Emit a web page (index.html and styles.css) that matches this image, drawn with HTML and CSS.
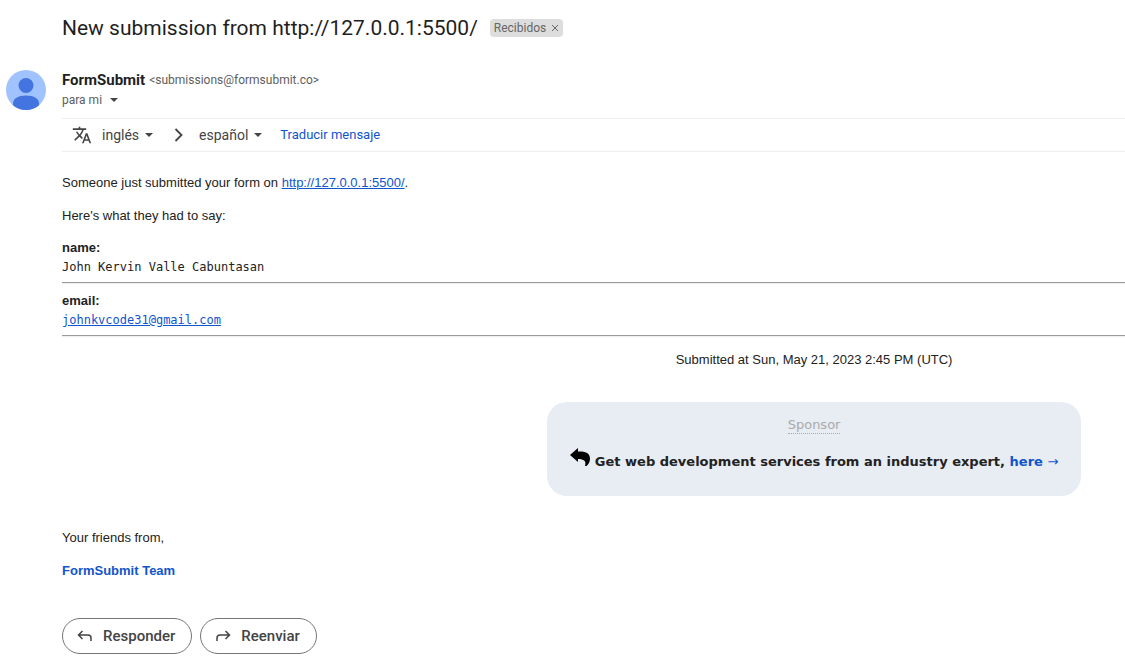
FILE: index.html
```html
<!DOCTYPE html>
<html lang="es">
<head>
<meta charset="utf-8">
<meta name="viewport" content="width=device-width, initial-scale=1">
<title>New submission from http://127.0.0.1:5500/</title>
<link rel="stylesheet" href="styles.css">
</head>
<body>
<main class="mail">
  <header class="subject">
    <h1 class="subject-title">New submission from http://127.0.0.1:5500/</h1>
    <div class="label">
      <span>Recibidos</span>
      <button class="label-remove" type="button" aria-label="Quitar etiqueta">
        <svg width="8" height="8" viewBox="0 0 8 8" aria-hidden="true"><path d="M1 1l6 6M7 1L1 7" stroke="currentColor" fill="none"/></svg>
      </button>
    </div>
  </header>

  <div class="message">
    <svg class="avatar" viewBox="0 0 40 40" aria-hidden="true">
      <defs><clipPath id="disc"><circle cx="20" cy="20" r="20"/></clipPath></defs>
      <g clip-path="url(#disc)">
        <rect width="40" height="40" fill="#a0c3ff"/>
        <circle cx="20" cy="15.500" r="7.500" fill="#4374e0"/>
        <path d="M7 40v-6.500c0-5 5-8 13-8s13 3 13 8V40z" fill="#4374e0"/>
      </g>
    </svg>

    <div class="content">
      <div class="sender">
        <strong class="sender-name">FormSubmit</strong>
        <span class="sender-address">&lt;submissions@formsubmit.co&gt;</span>
      </div>
      <button class="recipient" type="button">para mi
        <svg class="caret" viewBox="0 0 8 4" aria-hidden="true"><path d="M0 0h8L4 4z" fill="currentColor"/></svg>
      </button>

      <div class="translate">
        <svg class="translate-icon" viewBox="0 0 24 24" aria-hidden="true"><path fill="currentColor" d="M12.870 15.070l-2.540-2.510.03-.03A17.520 17.520 0 0 0 14.070 6H17V4h-7V2H8v2H1v1.990h11.170C11.500 7.920 10.440 9.750 9 11.350 8.070 10.320 7.300 9.190 6.690 8h-2c.73 1.630 1.730 3.170 2.980 4.560l-5.090 5.020L4 19l5-5 3.110 3.110.76-2.040zM18.500 10h-2L12 22h2l1.120-3h4.750L21 22h2l-4.500-12zm-2.620 7l1.620-4.330L19.120 17h-3.240z"/></svg>
        <button class="language" type="button">inglés
          <svg class="caret" viewBox="0 0 8 4" aria-hidden="true"><path d="M0 0h8L4 4z" fill="currentColor"/></svg>
        </button>
        <svg class="chevron" viewBox="0 0 9 14" aria-hidden="true"><path d="M1.500 1l6 6-6 6" fill="none" stroke="currentColor" stroke-width="1.800"/></svg>
        <button class="language" type="button">español
          <svg class="caret" viewBox="0 0 8 4" aria-hidden="true"><path d="M0 0h8L4 4z" fill="currentColor"/></svg>
        </button>
        <a class="translate-link" href="#">Traducir mensaje</a>
      </div>

      <div class="body">
        <p class="text">Someone just submitted your form on <a href="#">http://127.0.0.1:5500/</a>.</p>
        <p class="text">Here's what they had to say:</p>
        <dl class="fields">
          <div class="field">
            <dt>name:</dt>
            <dd>John Kervin Valle Cabuntasan</dd>
          </div>
          <div class="field">
            <dt>email:</dt>
            <dd><a href="#">johnkvcode31@gmail.com</a></dd>
          </div>
        </dl>
        <div class="centered">
          <p class="submitted">Submitted at Sun, May 21, 2023 2:45 PM (UTC)</p>
          <aside class="sponsor">
            <span class="sponsor-label">Sponsor</span>
            <p class="sponsor-text">
              <svg class="sponsor-icon" viewBox="0 0 20 18" aria-hidden="true"><path d="M0 7L8 0v3.500c8-.5 12 2 12 7 0 3-1.300 5.500-3.500 7.500h-1.500c1.500-5-1-7-7-7V14z" fill="#000"/></svg>
              <span>Get web development services from an industry expert, <a href="#">here <span class="arrow">→</span></a></span>
            </p>
          </aside>
        </div>
        <p class="text">Your friends from,</p>
        <p class="text"><a class="team" href="#">FormSubmit Team</a></p>
      </div>

      <div class="actions">
        <button class="action" type="button">
          <svg class="action-icon" viewBox="0 0 16 12" aria-hidden="true"><path d="M5.500 1L1.500 5l4 4M1.500 5H11q3 0 3 3v3" fill="none" stroke="currentColor" stroke-width="1.500"/></svg>
          Responder
        </button>
        <button class="action" type="button">
          <svg class="action-icon" viewBox="0 0 16 12" aria-hidden="true"><path d="M10.500 1l4 4-4 4M14.500 5H5Q2 5 2 8v3" fill="none" stroke="currentColor" stroke-width="1.500"/></svg>
          Reenviar
        </button>
      </div>
    </div>
  </div>
</main>
</body>
</html>
```
FILE: styles.css
```css
* { box-sizing: border-box; }
body {
  margin: 0;
  background: #fff;
  color: #222;
  font: 13px/20px "Liberation Sans", Arial, sans-serif;
}
button {
  padding: 0;
  border: 0;
  background: none;
  color: inherit;
  font: inherit;
  cursor: pointer;
}
a { color: #15c; }
p, h1, dl, dd { margin: 0; }
svg { display: block; flex: none; }

.subject {
  display: flex;
  align-items: center;
  gap: 12px;
  padding: 14px 0 0 62px;
}
.subject-title {
  color: #1f1f1f;
  font: 400 21px/28px Roboto, sans-serif;
}
.label {
  display: flex;
  align-items: center;
  gap: 5px;
  height: 18px;
  padding: 0 4px;
  border-radius: 4px;
  background: #ddd;
  color: #666;
  font: 12px/18px Roboto, sans-serif;
}
.message {
  display: flex;
  gap: 16px;
  padding: 28px 0 0 6px;
}
.avatar { width: 40px; height: 40px; }
.content { flex: 1; min-width: 0; }
.sender { display: flex; gap: 4px; }
.sender-name { color: #1f1f1f; font: 700 15px/20px Roboto, sans-serif; }
.sender-address { color: #5e5e5e; font: 12px/20px Roboto, sans-serif; }
.recipient {
  display: flex;
  align-items: center;
  gap: 8px;
  color: #5e5e5e;
  font: 12px/20px Roboto, sans-serif;
}
.caret { width: 8px; height: 4px; color: #444; }
.translate {
  display: flex;
  align-items: center;
  height: 34px;
  margin-top: 8px;
  padding-left: 10px;
  border: solid #eee;
  border-width: 1px 0;
  color: #444;
  font: 14px/20px Roboto, sans-serif;
}
.translate-icon { width: 20px; height: 20px; margin-right: 10px; }
.language { display: flex; align-items: center; gap: 6px; }
.chevron { width: 9px; height: 14px; margin: 0 16px 0 21px; }
.translate-link { margin-left: 18px; font-size: 13px; text-decoration: none; }
.body { padding-top: 21px; }
.text { margin-bottom: 13px; }
.field {
  padding-bottom: 5px;
  margin-bottom: 9px;
  border-bottom: 1px solid #9a9a9a;
  box-shadow: 0 1px #eee;
}
.field dt { font-weight: 700; line-height: 18px; }
.field dd { font: 12px/20px "DejaVu Sans Mono", monospace; }
.centered {
  display: flex;
  flex-direction: column;
  align-items: center;
  gap: 32px;
  padding: 5px 0 32px 41.5%;
}
.sponsor {
  display: flex;
  flex-direction: column;
  align-items: center;
  gap: 14px;
  padding: 15px 23px 24px;
  border-radius: 20px;
  background: #e8ecf3;
  font: 13px/20px "DejaVu Sans", Verdana, sans-serif;
}
.sponsor-label { color: #aaa; line-height: 16px; border-bottom: 1px dotted #aaa; }
.sponsor-text {
  display: flex;
  align-items: flex-end;
  gap: 5px;
  height: 24px;
  font-weight: 700;
  white-space: nowrap;
}
.sponsor-text a, .team { font-weight: 700; text-decoration: none; }
.sponsor-text .arrow { font-weight: 400; }
.sponsor-icon { align-self: flex-start; width: 20px; height: 18px; }
.actions { display: flex; gap: 8px; padding: 24px 0 13px; }
.action {
  display: flex;
  align-items: center;
  gap: 10px;
  height: 36px;
  padding: 0 16px 0 14px;
  border: 1px solid #747775;
  border-radius: 18px;
  color: #444;
  font: 500 15px/20px Roboto, sans-serif;
}
.action-icon { width: 16px; height: 12px; }
```
